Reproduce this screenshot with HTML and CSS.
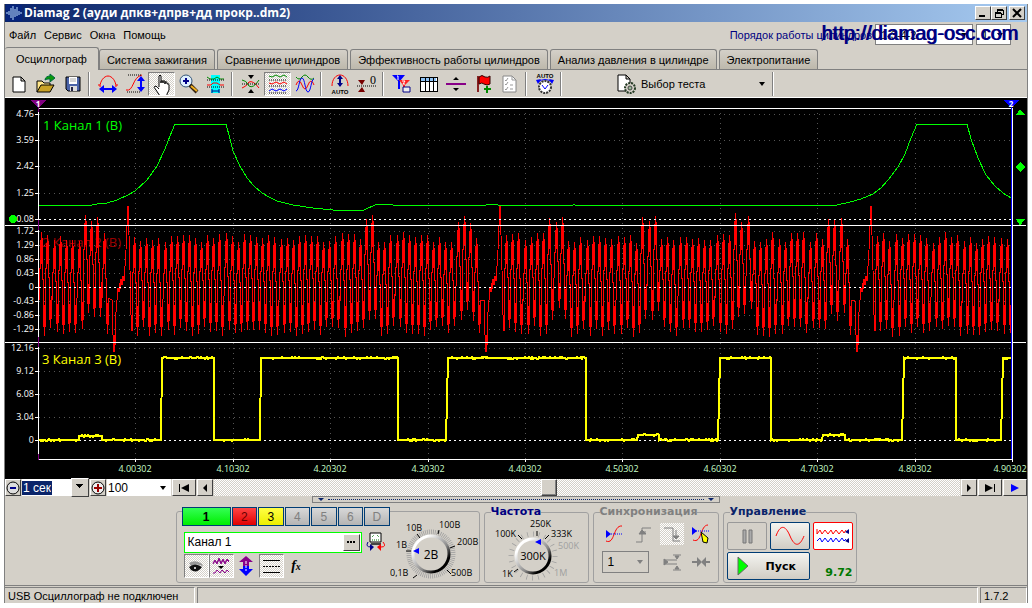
FILE: index.html
```html
<!DOCTYPE html>
<html lang="ru">
<head>
<meta charset="utf-8">
<title>Diamag 2</title>
<link rel="stylesheet" href="styles.css">
</head>
<body>
<div class="window">
  <header class="titlebar">
    <svg class="app-icon" width="16" height="16" viewBox="0 0 16 16"><rect width="16" height="16" fill="#06247c"/><path d="M0 8h2M3 6v4M5 3v10M7 1v14M9 4v8M11 2v9M13 6v4M14 8h2" stroke="#bfe0ff" stroke-width="1"/></svg>
    <h1 class="title">Diamag 2 (ауди дпкв+дпрв+дд прокр..dm2)</h1>
    <div class="window-buttons">
      <button class="caption" aria-label="Свернуть"><svg width="12" height="10"><path d="M2 8h6" stroke="#000" stroke-width="2"/></svg></button>
      <button class="caption" aria-label="Восстановить"><svg width="12" height="10" fill="none" stroke="#000" shape-rendering="crispEdges"><path d="M4 1h6M4 2h6v4h-2M4 1v3M2 4h6M2 5h6v4h-6z"/></svg></button>
      <button class="caption close" aria-label="Закрыть"><svg width="12" height="10"><path d="M2 1l8 8M10 1l-8 8" stroke="#000" stroke-width="2"/></svg></button>
    </div>
  </header>

  <div class="menubar">
    <nav class="menu"><button>Файл</button><button>Сервис</button><button>Окна</button><button>Помощь</button></nav>
    <div class="order">
      <label for="order">Порядок работы цилиндров</label>
      <span class="combo order-box"><select id="order"><option>1-3-4-2</option></select></span>
      <span class="combo spin"><select aria-label="Цилиндр"><option>1</option></select></span>
    </div>
    <a class="watermark" href="#">http://diamag-osc.com</a>
  </div>

  <div class="tabs" role="tablist">
    <button class="tab active" role="tab">Осциллограф</button>
    <button class="tab" role="tab">Система зажигания</button>
    <button class="tab" role="tab">Сравнение цилиндров</button>
    <button class="tab" role="tab">Эффективность работы цилиндров</button>
    <button class="tab" role="tab">Анализ давления в цилиндре</button>
    <button class="tab" role="tab">Электропитание</button>
  </div>

  <div class="toolbar">
    <div class="tools">
      <button class="tool" aria-label="Новый"><svg width="22" height="22" viewBox="0 0 22 22"><path d="M5 4h8l4 4v11H5zM13 4v4h4" fill="#fff" stroke="#000"/></svg></button>
      <button class="tool" aria-label="Открыть"><svg width="22" height="22" viewBox="0 0 22 22"><path d="M2 19V8h5l2 2h6v3" fill="#ffe68a" stroke="#000"/><path d="M2 19l4-7h13l-4 7z" fill="#c9a227" stroke="#000"/><path d="M10 7c0-3 3-4 5-4V1l5 4-5 4V6c-2 0-3 0-5 1z" fill="#0a9a0a" stroke="#064"/></svg></button>
      <button class="tool" aria-label="Сохранить"><svg width="22" height="22" viewBox="0 0 22 22"><path d="M4 4h14v14H6l-2-2z" fill="#4a63a8" stroke="#000"/><path d="M7 4h8v7H7z" fill="#fff"/><path d="M8 6h6M8 8h6" stroke="#aaa"/><path d="M8 13h7v5H8z" fill="#ddd"/><path d="M9 14h2v4H9z" fill="#224"/></svg></button>
    </div>
    <div class="tools">
      <button class="tool" aria-label="Растянуть по времени"><svg width="22" height="22" viewBox="0 0 22 22" fill="none"><path d="M3 14C3 8 7 3 11 3s8 5 8 11" stroke="#f00"/><path d="M5 16h12" stroke="#00f" stroke-width="2"/><path d="M2 16l5-4v8zM20 16l-5-4v8z" fill="#00f"/><path d="M2 11v2M20 11v2" stroke="#f00"/></svg></button>
      <button class="tool" aria-label="Растянуть по амплитуде"><svg width="22" height="22" viewBox="0 0 22 22" fill="none"><path d="M2 17c8 2 6-13 16-15" stroke="#f00"/><path d="M4 2h14M3 19h14" stroke="#000" stroke-dasharray="1 1"/><path d="M17 7v8" stroke="#00f" stroke-width="2"/><path d="M17 3l-4 5h8zM17 19l-4-5h8z" fill="#00f"/></svg></button>
      <button class="tool pressed" aria-label="Рука"><svg width="22" height="22" viewBox="0 0 22 22"><path d="M8 14V3q1-2 2 0v7V8q2-1 2 1v1-2q2-1 2 1v2-2q2-1 2 1v1q2-1 2 1v5l-2 4v2H9l-4-6q-3-3-1-4 2 0 4 3" fill="#fff" stroke="#000"/></svg></button>
      <button class="tool" aria-label="Масштаб"><svg width="22" height="22" viewBox="0 0 22 22"><circle cx="8" cy="8" r="6" fill="#dff0ff" stroke="#357"/><path d="M5 8h6M8 5v6" stroke="#008" stroke-width="2"/><path d="M12 12l7 7" stroke="#321" stroke-width="4"/><path d="M13 13l6 5" stroke="#f0b020" stroke-width="2"/></svg></button>
      <button class="tool" aria-label="Диапазон"><svg width="22" height="22" viewBox="0 0 22 22" fill="none"><path d="M6 2h9v18H6z" fill="#0ff"/><path d="M2 4l3 2h4l3-2 3 2h4" stroke="#080"/><path d="M2 7h18M2 14h18" stroke="#000" stroke-dasharray="1 1"/><path d="M2 12h4l2-2h4l3 2h4" stroke="#f00"/><path d="M7 18h7M7 16v4M14 16v4" stroke="#008"/></svg></button>
    </div>
    <div class="tools">
      <button class="tool" aria-label="Совместить"><svg width="22" height="22" viewBox="0 0 22 22" fill="none"><path d="M2 15q4-1 7-6 4-2 10 6" stroke="#f00"/><path d="M2 7q4 0 7 6 4 3 10-6" stroke="#080"/><path d="M2 11h18" stroke="#000" stroke-dasharray="1 1"/><path d="M8 2h6l-3 4zM8 20h6l-3-4z" fill="#000"/></svg></button>
      <button class="tool pressed" aria-label="Раздельно"><svg width="22" height="22" viewBox="0 0 22 22" fill="none"><path d="M2 3l3 1 4-2 4 2 4-2 3 2" stroke="#080"/><path d="M2 10l3 1 4-2 4 2 4-2 3 2" stroke="#f00"/><path d="M2 18l3-2 4 2 4-2 4 2 3-2" stroke="#00f"/><path d="M2 7h18M2 13h18M2 20h18" stroke="#000" stroke-dasharray="1 1"/></svg></button>
      <button class="tool" aria-label="Наложение"><svg width="22" height="22" viewBox="0 0 22 22" fill="none"><path d="M2 4q3 4 6 0t6 0 6 1" stroke="#080"/><path d="M2 12q3-8 6 0t6 0 6 0" stroke="#f00"/><path d="M2 18C5 18 5 5 8 5s3 14 6 14 3-13 6-13" stroke="#00f"/></svg></button>
    </div>
    <div class="tools">
      <button class="tool" aria-label="Автомасштаб"><svg width="22" height="22" viewBox="0 0 22 22" fill="none"><path d="M3 13C3 6 7 2 11 2s8 4 8 11" stroke="#f00"/><path d="M11 4v9" stroke="#008" stroke-width="2"/><path d="M11 2l-3 4h6zM11 14l-3-4h6z" fill="#008"/><text class="tiny" x="11" y="21" text-anchor="middle">AUTO</text></svg></button>
      <button class="tool" aria-label="Ноль"><svg width="22" height="22" viewBox="0 0 22 22"><path d="M1 13h20" stroke="#000" stroke-dasharray="1 1"/><path d="M2 7h7l-3 5zM2 19h7l-3-5z" fill="#700"/><text class="zero" x="14" y="11">0</text></svg></button>
    </div>
    <div class="tools">
      <button class="tool" aria-label="Маркеры"><svg width="22" height="22" viewBox="0 0 22 22"><path d="M1 2h13l-5 6v8H7V8z" fill="#00f"/><path d="M8 7h11l-5 5v7h-2v-7z" fill="#f22"/><path d="M6 3h1v4M11 8h3l-2 3h2" fill="none" stroke="#fff"/><path d="M12 14h7v5h-7z" fill="#eee" stroke="#008"/></svg></button>
      <button class="tool" aria-label="Таблица"><svg width="22" height="22" viewBox="0 0 22 22" shape-rendering="crispEdges"><path d="M2 4h17v14H2z" fill="#fff" stroke="#000"/><path d="M3 5h15v3H3z" fill="#8fc3f5"/><path d="M2 8h17M7 4v14M11 4v14M15 4v14" stroke="#000"/></svg></button>
      <button class="tool" aria-label="Разделить"><svg width="22" height="22" viewBox="0 0 22 22"><path d="M1 11h20" stroke="#808" stroke-width="2"/><path d="M8 7h6l-3-3zM8 15h6l-3 3z"/></svg></button>
      <button class="tool" aria-label="Метка"><svg width="22" height="22" viewBox="0 0 22 22"><path d="M6 3v16" stroke="#822" stroke-width="2"/><path d="M7 4q3-3 6 0 3 1 5-1v8q-3 2-6 0-2-2-5 0z" fill="#f00" stroke="#300"/><path d="M12 16h7M15 13v7" stroke="#080" stroke-width="2"/></svg></button>
      <button class="tool" aria-label="Отчёт"><svg width="22" height="22" viewBox="0 0 22 22" fill="none"><path d="M4 3h9l4 4v12H4z" fill="#fff" stroke="#888"/><path d="M13 3v4h4M6 7l1 1 2-3M6 11l1 1 2-3M6 16l1 1 2-3M11 12h3M11 16h3" stroke="#999"/></svg></button>
    </div>
    <div class="tools">
      <button class="tool" aria-label="Авто"><svg width="22" height="22" viewBox="0 0 22 22" fill="none"><text class="tiny" x="11" y="5" text-anchor="middle">AUTO</text><path d="M4 9q7-5 14 0" stroke="#00f"/><path d="M2 7l5-1-3 5zM20 7l-5-1 3 5z" fill="#00f"/><circle cx="11" cy="14" r="6" fill="#fff" stroke="#333" stroke-width="2" stroke-dasharray="2 1"/><path d="M8 12l3 4 3-4" stroke="#00f" stroke-width="1"/></svg></button>
    </div>
    <div class="tools test">
      <button class="test-button"><svg width="22" height="22" viewBox="0 0 22 22" fill="none"><path d="M2 2h8l4 4v12H2zM10 2v4h4" fill="#fff" stroke="#000"/><circle cx="14" cy="15" r="5" fill="#d4d0c8" stroke="#243a24" stroke-width="2" stroke-dasharray="2 1"/><circle cx="14" cy="15" r="2" fill="#9b9" stroke="#444"/></svg>Выбор теста<span class="down"></span></button>
    </div>
    <div class="tools"></div>
  </div>

  <svg class="chart" id="chart" viewBox="5 98 1022 381" role="img" aria-label="Осциллограмма">
    <g class="grid" id="grid"></g>
    <path class="trace red" id="trace2"/>
    <path class="zero-line" d="M39 219H1011M39 287H1011M39 440H1011"/>
    <path class="frame" d="M38 108H1012M5 225H1026M5 342H1026M38 459H1012M38 103V459M1012 108V459"/>
    <path class="cursor1" d="M38 103V112M38 220V230M38 337V347M38 454V460"/>
    <path class="cursor2" d="M1011 106V459"/>
    <path class="trace green" d="M39 205H92L97 204 107 203 117 200 128 195 135 191 147 180 157 166 165 149 170 136 175 124H226L230 139 233 151 240 166 247 178 254 186 262 193 269 197 277 201 293 205 313 208 333 210H364L375 205 386 204H392L393 205H486L488 204H497L498 205H573L574 204 575 205H837L850 202 861 199 873 194 881 188 888 180 898 167 905 154 911 138 917 124H935L936 125 937 124H958L959 125 960 124H967L971 139 978 158 986 175 995 186 1003 193 1011 198"/>
    <path class="trace yellow" id="trace3"/>
    <g class="axis" id="axis"></g>
    <text class="ch ch1" x="43" y="130">1 Канал 1 (В)</text>
    <text class="ch ch2" x="42" y="247">2 Канал 2 (В)</text>
    <text class="ch ch3" x="42" y="364">3 Канал 3 (В)</text>
    <path d="M31 100H46L38 108z" fill="#800080"/><text class="mark" x="38" y="107">1</text>
    <path d="M1003 100H1019L1011 108z" fill="#00f"/><text class="mark" x="1011" y="107">2</text>
    <circle cx="13" cy="219" r="4" fill="#0f0"/>
    <path d="M1016 115h9l-5-6zM1020 162l5 5-5 5-5-5zM1016 219h9l-5 7z" fill="#0f0"/>
  </svg>

  <div class="scroll-row">
    <button class="flat" aria-label="Сжать"><svg width="14" height="14"><circle cx="7" cy="7" r="6" fill="#ddd" stroke="#000"/><path d="M4 7h6" stroke="#008" stroke-width="2"/></svg></button>
    <span class="combo scale"><select class="picked" aria-label="Развёртка"><option>1 сек</option></select></span>
    <button class="flat" aria-label="Растянуть"><svg width="14" height="14"><circle cx="7" cy="7" r="6" fill="#eee" stroke="#000"/><path d="M3 7h8M7 3v8" stroke="#900" stroke-width="2"/></svg></button>
    <span class="combo percent"><select aria-label="Масштаб"><option>100</option></select></span>
    <button class="flat wide" aria-label="В начало"><svg width="12" height="8"><path d="M1 0h1v8H1zM11 0v8L3 4z"/></svg></button>
    <button class="flat" aria-label="Назад"><svg width="6" height="8"><path d="M5 0v8L1 4z"/></svg></button>
    <input class="track" type="range" min="0" max="1000" value="448" aria-label="Прокрутка">
    <button class="flat" aria-label="Вперёд"><svg width="6" height="8"><path d="M1 0v8l4-4z"/></svg></button>
    <button class="flat wide" aria-label="В конец"><svg width="12" height="8"><path d="M1 0v8l8-4zM10 0h1v8h-1z"/></svg></button>
    <button class="flat wide" aria-label="Пуск просмотра"><svg width="10" height="8"><path d="M1 0v8l8-4z" fill="#00f"/></svg></button>
  </div>

  <button class="splitter" aria-label="Свернуть панель"><i></i><b></b><i></i></button>

  <main class="panels">
    <section class="group channel">
      <div class="channel-controls">
        <div class="channels">
          <button class="chan c1">1</button><button class="chan c2">2</button><button class="chan c3">3</button><button class="chan">4</button><button class="chan">5</button><button class="chan">6</button><button class="chan">D</button>
        </div>
        <div class="name-row">
          <div class="name-box"><input value="Канал 1" aria-label="Имя канала"><button aria-label="Выбрать"><svg width="9" height="2"><path d="M0 0h2v2H0zM3 0h2v2H3zM6 0h2v2H6z"/></svg></button></div>
          <button class="plain" aria-label="Инвертировать"><svg width="20" height="20" viewBox="0 0 20 20" fill="none"><path d="M4 1h11v9H4z" fill="#fff" stroke="#000"/><path d="M5 11h10v2H5z" fill="#444"/><path d="M6 5l2-2M11 3l2 2M6 8h8" stroke="#070" stroke-dasharray="1 1"/><path d="M2 10q-3 5 3 5" stroke="#008"/><path d="M4 12l4 3-4 4z" fill="#008"/><path d="M17 10q4 5-2 5" stroke="#f00"/><path d="M15 12l-4 3 4 4z" fill="#f00"/></svg></button>
        </div>
        <div class="toggles">
          <button class="toggle pressed" aria-label="Видимость"><svg width="22" height="20" viewBox="0 0 22 20"><path d="M4 7q7-4 13 1l1 2q-7-3-12 0z" fill="#999"/><path d="M4 11q6-5 13 0-5 7-11 3z" fill="#111"/><circle cx="10" cy="12" r="1" fill="#fff"/></svg></button>
          <button class="toggle pressed" aria-label="Фильтр"><svg width="22" height="20" viewBox="0 0 22 20" fill="none" stroke="#808"><path d="M3 7l2-3 2 3 2-5 2 5 2-4 2 4 2-4 2 2"/><path d="M3 8l2-3 2 3 2-5 2 5 2-4 2 4 2-4 2 2"/><path d="M3 17l2 0 2-3 3 3 2-3 3 3 2-3 2 2"/><path d="M8 10h6l-3 3z" fill="#000" stroke="none"/></svg></button>
          <button class="toggle" aria-label="Сдвиг"><svg width="22" height="20" viewBox="0 0 22 20"><path d="M11 0l7 6h-4v4H8V6H4z" fill="#808"/><path d="M11 20l7-7h-4v-3H8v3H4z" fill="#00f"/><path d="M11 5v10" stroke="#fff" stroke-dasharray="3 1"/></svg></button>
          <button class="toggle pressed" aria-label="Линии"><svg width="22" height="20" viewBox="0 0 22 20" stroke="#000" shape-rendering="crispEdges"><path d="M3 4h17M3 16h17"/><path d="M3 10h17" stroke-dasharray="2 1"/></svg></button>
          <button class="toggle fx" aria-label="Функция">f<small>x</small></button>
        </div>
      </div>
      <svg class="knob" width="89" height="68" viewBox="388 514 89 68">
        <defs><linearGradient id="rim" x1="0" y1="0" x2="1" y2="1"><stop offset="0.2" stop-color="#fff"/><stop offset="0.6" stop-color="#888"/><stop offset="0.8" stop-color="#000"/></linearGradient></defs>
        <circle class="ticks fine" cx="429" cy="556" r="22" pathLength="360" transform="rotate(135 429 556)"/>
        <path class="dark-ticks" d="M415 577l-4 3M409 553h-5M418 540l-3-4M436 536l1-4M448 550l5-2M445 572l4 4"/>
        <circle cx="429" cy="556" r="18" fill="#d4d0c8" stroke="url(#rim)" stroke-width="3"/>
        <path d="M411 553l6-3v6z" fill="#00f"/>
        <text class="value" x="429" y="561">2В</text>
        <text x="388" y="578">0,1В</text><text x="394" y="550">1В</text><text x="404" y="533">10В</text><text x="437" y="530">100В</text><text x="455" y="547">200В</text><text x="449" y="578">500В</text>
      </svg>
    </section>

    <fieldset class="group frequency">
      <legend>Частота</legend>
      <svg class="knob" width="92" height="64" viewBox="492 518 92 64">
        <circle class="ticks" cx="533" cy="557" r="22" pathLength="360" transform="rotate(135 533 557)"/>
        <path class="dark-ticks" d="M518 570l-4 3M522 540l-4-4M537 537v-5M545 540l4-4"/>
        <circle cx="533" cy="557" r="17" fill="#d4d0c8" stroke="url(#rim)" stroke-width="3"/>
        <path d="M535 543l6-3v6z" fill="#00f"/>
        <text class="value mid" x="533" y="561">300K</text>
        <text x="502" y="578">1K</text><text x="495" y="538">100K</text><text x="530" y="528">250K</text><text x="551" y="538">333K</text><text class="dim" x="558" y="550">500K</text><text class="dim" x="554" y="577">1M</text>
      </svg>
    </fieldset>

    <fieldset class="group sync">
      <legend>Синхронизация</legend>
      <div class="sync-grid">
        <button class="plain" aria-label="Уровень"><svg width="22" height="20" viewBox="0 0 22 20" fill="none"><path d="M3 17c9 4 7-16 16-15" stroke="#f00"/><path d="M8 10h12" stroke="#00f" stroke-dasharray="1 1"/><path d="M3 6l5 4-5 4z" fill="#00f"/></svg></button>
        <button class="plain" aria-label="Фронт"><svg width="22" height="20" viewBox="0 0 22 20" fill="none" stroke="#808080"><path d="M4 18h6V4h9"/><path d="M8 8h6M7 10l3-4 4 4z" fill="#808080"/></svg></button>
        <button class="plain lit" aria-label="Спад"><svg width="22" height="20" viewBox="0 0 22 20" fill="none" stroke="#808080"><path d="M3 4h9v13h7M15 6v8"/><path d="M12 12h6l-3 3z" fill="#808080"/></svg></button>
        <button class="plain" aria-label="Выбор уровня"><svg width="22" height="20" viewBox="0 0 22 20" fill="none"><path d="M3 16c9 4 7-15 15-15" stroke="#f00"/><path d="M6 7h13" stroke="#00f" stroke-dasharray="1 1"/><path d="M2 3l5 4-5 4z" fill="#00f"/><path d="M11 8l7 6-1 5-4-1z" fill="#ff0" stroke="#000"/></svg></button>
        <span class="combo sync-select"><select aria-label="Канал синхронизации"><option>1</option></select></span>
        <button class="plain" aria-label="Гистерезис"><svg width="22" height="20" viewBox="0 0 22 20" fill="#808080" stroke="#808080"><path d="M12 3h8M12 18h8M4 8h12M4 12h12"/><path d="M14 4h4l-2 3zM14 17h4l-2-3zM3 7l4 3-4 3z"/></svg></button>
        <button class="plain" aria-label="Центр"><svg width="22" height="20" viewBox="0 0 22 20" fill="#808080"><path d="M2 9h5V5l5 5-5 5v-4H2zM20 9h-4V5l-5 5 5 5v-4h4z"/></svg></button>
      </div>
    </fieldset>

    <fieldset class="group control">
      <legend>Управление</legend>
      <div class="control-grid">
        <button class="push off" aria-label="Пауза"><svg width="14" height="18" viewBox="0 0 14 18"><path d="M3 3h3v13H3zM9 3h3v13H9z" fill="#aaa" stroke="#777"/></svg></button>
        <button class="push" aria-label="Однократно"><svg width="30" height="20" viewBox="0 0 30 20" fill="none"><path d="M1 10C5-1 10-2 15 10s10 10 14 0" stroke="#f00"/></svg></button>
        <button class="push on" aria-label="Непрерывно"><svg width="34" height="20" viewBox="0 0 34 20" fill="none"><path d="M1 3v5l3-4 2 4 3-4 3 4 3-4 2 4 3-4 3 4 3-4 2 3 2-3" stroke="#f00"/><path d="M1 15l3-3 2 4 3-4 3 4 3-4 2 4 3-4 3 4 3-4 2 3 2-2" stroke="#00f"/><path d="M33 3v5l-4-2zM33 12v5l-4-2z" fill="#008"/></svg></button>
        <button class="push start"><svg width="12" height="20" viewBox="0 0 12 20"><path d="M1 1l10 9L1 19z" fill="#0f0" stroke="#666"/></svg>Пуск</button>
        <output class="voltage">9.72</output>
      </div>
    </fieldset>
  </main>

  <footer class="status">
    <div class="cell first">USB Осциллограф не подключен</div>
    <div class="cell grow"></div>
    <div class="cell version">1.7.2</div>
  </footer>
</div>
<script src="chart.js"></script>
</body>
</html>
```
FILE: styles.css
```css
* { box-sizing: border-box; }
body { margin: 0; background: #fff; color: #000; font: 11px/14px "Liberation Sans", Arial, sans-serif; }
button, select, input { font: inherit; color: inherit; margin: 0; padding: 0; border: 0; border-radius: 0; background: none; }
svg { display: block; flex: none; }
.window { margin: 4px 4px 5px; border: 1px solid #808080; border-width: 0 1px; background: #d4d0c8; }

.titlebar { display: flex; align-items: center; height: 18px; padding: 0 2px 0 1px; gap: 2px; background: linear-gradient(90deg, #0a246a, #a6caf0); }
.title { flex: 1; margin: 0; color: #fff; font: bold 12px/16px "Open Sans", sans-serif; white-space: nowrap; }
.window-buttons { display: flex; }
.caption { width: 16px; height: 14px; display: flex; align-items: center; justify-content: center; background: #d4d0c8; border: 1px solid; border-color: #fff #404040 #404040 #fff; }
.close { margin-left: 2px; }

.menubar { position: relative; display: flex; justify-content: space-between; align-items: center; height: 25px; padding: 0 16px 0 4px; }
.menu { display: flex; gap: 8px; }
.order { display: flex; align-items: center; gap: 3px; color: navy; }
.order .combo { height: 21px; border: 1px solid #808080; color: #000; }
.order-box { width: 98px; }
.spin { width: 35px; }
.watermark { position: absolute; right: 9px; top: 0; color: #000080; font: 20px/22px "Liberation Sans", Arial, sans-serif; text-decoration: none; text-shadow: 1px 0 #000080; }

.combo { display: flex; align-items: center; position: relative; background: #fff; }
.combo select { appearance: none; flex: 1; padding: 0 5px; line-height: 14px; }
.combo::after, .down { content: ""; border: 3px solid transparent; border-top: 4px solid #000; border-bottom: 0; margin: 0 5px; }
.spin::after { margin: 0 7px 0 0; }

.tabs { display: flex; align-items: flex-end; gap: 2px; height: 23px; border-bottom: 1px solid #808080; }
.tab { height: 20px; padding: 0 7px; white-space: nowrap; background: linear-gradient(#d4d0c8, #bdb8ac); border: 1px solid #808080; border-bottom: 0; border-radius: 3px 3px 0 0; }
.tab.active { height: 23px; margin: 0 -2px -1px 0; padding: 0 11px; background: #d4d0c8; border-left: 0; }

.toolbar { display: flex; align-items: center; height: 28px; border-bottom: 1px solid #fff; }
.tools { display: flex; padding-right: 3px; margin-right: 4px; height: 24px; border-right: 1px solid #fff; box-shadow: inset -1px 0 #808080; }
.tools:last-child { border: 0; box-shadow: none; }
.tool, .toggle { width: 27px; height: 24px; display: flex; align-items: center; justify-content: center; }
.pressed, .lit { background: repeating-conic-gradient(#fff 0 25%, #d4d0c8 0 50%) 0 0 / 2px 2px; }
.pressed { border: 1px solid; border-color: #808080 #fff #fff #808080; }
.tiny { font: bold 6px "Liberation Sans", sans-serif; fill: #000; }
.zero { font: 12px "Liberation Serif", serif; }
.test { width: 208px; padding: 0 4px 0 50px; }
.test-button { flex: 1; display: flex; align-items: center; gap: 3px; }
.down { margin-left: auto; margin-right: 4px; }

.chart { width: 100%; background: #000; shape-rendering: crispEdges; font: 9px "Open Sans", sans-serif; }
.grid-line, .frame, .zero-line, .cursor1, .cursor2, .trace { fill: none; stroke-width: 1; }
.grid-line { stroke: #555; stroke-dasharray: 1 4; }
.zero-line { stroke: #fff; stroke-dasharray: 2 3; }
.frame { stroke: #fff; }
.cursor1 { stroke: #800080; }
.cursor2 { stroke: #0000ff; }
.red { stroke: #f00; }
.green { stroke: #0f0; }
.yellow { stroke: #ff0; stroke-width: 2; }
.axis text { fill: #fff; }
.axis .time { fill: #c8ffc8; text-anchor: middle; }
.axis .level { text-anchor: end; }
.ch { font-size: 13px; }
.ch1 { fill: #0f0; }
.ch2 { fill: #f00; opacity: 0.6; }
.ch3 { fill: #ff0; }
.mark { font-size: 8px; font-weight: bold; fill: #fff; text-anchor: middle; }

.scroll-row { display: flex; gap: 1px; height: 17px; }
.flat { width: 16px; display: flex; align-items: center; justify-content: center; border: 1px solid; border-color: #fff #404040 #404040 #fff; background: #d4d0c8; flex: none; }
.wide { width: 24px; }
.scale { width: 67px; }
.scale .picked { flex: 0 1 29px; margin-right: auto; padding: 0 1px; background: #0a246a; color: #fff; }
.scale::after { margin: 0; border: 0; width: 16px; height: 17px; border: 1px solid; border-color: #fff #404040 #404040 #fff; background: conic-gradient(from 315deg at 50% 65%, #000 0 90deg, #d4d0c8 0) 4px 6px / 7px 4px no-repeat, #d4d0c8; background: linear-gradient(#000, #000) 4px 5px / 7px 1px no-repeat, linear-gradient(#000, #000) 5px 6px / 5px 1px no-repeat, linear-gradient(#000, #000) 6px 7px / 3px 1px no-repeat, linear-gradient(#000, #000) 7px 8px / 1px 1px no-repeat, #d4d0c8; }
.percent { width: 64px; }
.percent select { padding: 0 1px; }
.scroll-row .combo { font-size: 12px; }
.track { appearance: none; flex: 1; height: 17px; background: repeating-conic-gradient(#fff 0 25%, #d4d0c8 0 50%) 0 0 / 2px 2px; }
.track::-webkit-slider-thumb { appearance: none; width: 16px; height: 17px; background: #d4d0c8; border: 1px solid; border-color: #fff #404040 #404040 #fff; box-shadow: inset -1px -1px #808080; }

.splitter { display: flex; align-items: center; gap: 4px; width: 408px; height: 7px; margin: 0 auto; padding: 0 5px; border: 1px solid #808080; }
.splitter i { border: 3px solid transparent; border-top: 3px solid #0a246a; border-bottom: 0; }
.splitter b { flex: 1; border-top: 1px dotted #0a246a; }

.panels { display: flex; justify-content: center; align-items: flex-end; gap: 4px; padding: 3px 0 2px; }
.group { margin: 0; padding: 0; min-width: 0; height: 77px; border: 1px solid #a0a0a0; border-radius: 3px; }
.group legend { margin-left: 6px; padding: 0; color: #000080; font: bold 11px/12px "DejaVu Sans", sans-serif; }
.channel { display: flex; width: 304px; height: 72px; justify-content: space-between; }
.channel-controls { display: flex; flex: none; flex-direction: column; width: 208px; margin-left: 5px; }
.channels { display: flex; gap: 1px; height: 19px; margin-top: -5px; background: #d4d0c8; }
.chan { flex: 1; border: 1px solid #003c74; background: linear-gradient(#d8d8d8, #b4b4b4); color: #808080; font-size: 12px; line-height: 16px; }
.c1 { flex: 2; background: linear-gradient(#3f5, #0e0); color: #000; font-weight: bold; }
.c2 { background: linear-gradient(#f44, #e00000); color: #600; }
.c3 { background: linear-gradient(#ff4, #eded00); color: #000; }
.name-row { display: flex; align-items: center; gap: 4px; margin: 5px 0 1px 2px; }
.name-box { display: flex; width: 178px; height: 21px; padding: 1px; border: 1px solid #0f0; background: #fff; }
.name-box input { flex: 1; min-width: 0; padding-left: 2px; font-size: 12px; }
.name-box button { display: flex; align-items: center; justify-content: center; width: 17px; border: 1px solid; border-color: #fff #404040 #404040 #fff; background: #d4d0c8; }
.toggles { display: flex; margin-left: 2px; }
.toggle { width: 25px; }
.fx { font: italic bold 14px "Liberation Serif", serif; }
.fx small { font-size: 10px; }
.knob { font: 9px "Open Sans", sans-serif; }
.ticks { fill: none; stroke: #a0a0a0; stroke-width: 5; stroke-dasharray: 2 13; }
.fine { stroke-dasharray: 2 3; }
.dark-ticks { fill: none; stroke: #000; }
.value { font-size: 12px; text-anchor: middle; }
.mid { font-size: 11px; }
.dim { fill: #a0a0a0; }

.frequency { width: 105px; }
.frequency .knob { margin: -1px 0 0 7px; }
.sync { width: 126px; }
.sync legend { color: #808080; }
.sync-grid { display: grid; grid-template-columns: repeat(4, 24px); gap: 6px 5px; padding: 5px 0 0 8px; align-items: center; }
.plain { display: flex; align-items: center; justify-content: center; min-height: 22px; }
.sync-select { grid-column: span 2; width: 47px; height: 22px; border: 1px solid #808080; background: #d4d0c8; font-size: 12px; }
.sync-select::after { border-top-color: #808080; }
.control { width: 134px; }
.control legend { color: #0a246a; }
.control-grid { display: grid; grid-template-columns: repeat(3, 40px); gap: 2px 3px; padding: 4px 0 0 3px; }
.push { display: flex; align-items: center; justify-content: center; height: 28px; border: 1px solid #003c74; border-radius: 2px; background: linear-gradient(#f4f4f0, #d0ccc4); }
.off { border-color: #999; background: #d4d0c8; }
.on { border-color: #f00; background: #fff; }
.start { grid-column: span 2; justify-content: flex-start; gap: 17px; padding-left: 9px; font: bold 11px "DejaVu Sans", sans-serif; }
.voltage { align-self: end; color: #007800; font: bold 11px/14px "DejaVu Sans", sans-serif; text-align: right; }

.status { display: flex; gap: 2px; height: 18px; border-top: 1px solid #808080; padding-top: 1px; }
.cell { padding: 0 3px; line-height: 16px; border: 1px solid; border-color: #808080 #fff #fff #808080; border-bottom: 0; }
.first { width: 190px; border-left: 0; }
.grow { flex: 1; }
.version { width: 47px; }
```
FILE: chart.js
```js
const NS = 'http://www.w3.org/2000/svg';
const axis = document.getElementById('axis');
const grid = document.getElementById('grid');

function label(cls, x, y, text) {
  const t = document.createElementNS(NS, 'text');
  t.setAttribute('class', cls);
  t.setAttribute('x', x);
  t.setAttribute('y', y);
  t.textContent = text;
  axis.append(t);
}

function line(parent, cls, d) {
  const p = document.createElementNS(NS, 'path');
  p.setAttribute('class', cls);
  p.setAttribute('d', d);
  parent.append(p);
}

// Voltage levels of the three channels
const levels = [
  [114, '4.76'], [140, '3.59'], [166, '2.42'], [193, '1.25'], [219, '0.08'],
  [231, '1.72'], [245, '1.29'], [259, '0.86'], [273, '0.43'], [287, '0'],
  [301, '-0.43'], [315, '-0.86'], [329, '-1.29'],
  [348, '12.16'], [371, '9.12'], [394, '6.08'], [417, '3.04'], [440, '0']
];
for (const [y, text] of levels) {
  label('level', 34, y + 3, text);
  line(grid, 'grid-line', `M39 ${y}H1011`);
  line(axis, 'frame', `M35 ${y}H38`);
}

// Time marks
[135, 233, 330, 428, 525, 622, 720, 817, 915, 1012].forEach((x, i) => {
  label('time', Math.min(x, 1010), 472, (4.00302 + i / 10).toFixed(5));
  if (x < 1011) line(grid, 'grid-line', `M${x} 108V459`);
  line(axis, 'frame', `M${x} 459V462`);
});

// Repeatable noise
let seed = 7;
function noise() {
  seed = (seed * 16807) % 2147483647;
  return seed / 2147483647;
}

// Crankshaft sensor: 60-2 toothed wheel
const gaps = [114, 486, 857];
const bumps = [[83, 215], [90, 221], [96, 217], [367, 219], [373, 215], [455, 222], [462, 216], [468, 223],
  [548, 218], [555, 222], [561, 217], [641, 217], [648, 221], [654, 216], [734, 213], [740, 222], [746, 216],
  [826, 219], [833, 220], [839, 218]];
const pts = [];
function tooth(x, top, bottom) {
  const mid = (top + bottom) / 2;
  const up = mid - top;
  const low = bottom - mid;
  pts.push([x - 2, mid + low * 0.3], [x - 2, mid - up * 0.3], [x - 1, mid - up * 0.3], [x - 1, top + 8],
    [x, top + 8], [x, top], [x, top + up * 0.6], [x + 1, top + up * 0.6], [x + 1, top + 6], [x + 1, mid - up * 0.1],
    [x + 2, mid - up * 0.1], [x + 2, bottom - low * 0.2], [x + 3, bottom - low * 0.2], [x + 3, bottom],
    [x + 3, mid + low * 0.4], [x + 4, mid + low * 0.4], [x + 4, bottom - 9], [x + 4, mid + low * 0.3]);
}
function run(from, to) {
  const n = Math.round((to - from) / 6.15);
  const step = (to - from) / n;
  for (let i = 0; i < n; i++) {
    const x = Math.round(from + i * step);
    const bump = bumps.find(b => Math.abs(b[0] - x) <= 3);
    if (bump) tooth(x, bump[1], 308 + noise() * 13);
    else tooth(x, 232 + noise() * 11, 326 + noise() * 11);
  }
}
run(41, 110);
for (let g = 0; g < gaps.length; g++) {
  const x = gaps[g];
  pts.push([x - 2, 300], [x - 1, 335], [x, 352], [x, 335], [x + 1, 345], [x + 1, 320], [x + 2, 312], [x + 3, 300], [x + 4, 288],
    [x + 5, 292], [x + 5, 283], [x + 6, 289], [x + 7, 279], [x + 8, 285], [x + 9, 276], [x + 10, 281],
    [x + 11, 266], [x + 12, 250], [x + 13, 226], [x + 14, 206], [x + 14, 218], [x + 15, 235], [x + 16, 270], [x + 17, 315], [x + 18, 331]);
  run(x + 20, g < 2 ? gaps[g + 1] - 4 : 1013);
}
document.getElementById('trace2').setAttribute('d', 'M' + pts.filter(p => p[0] < 1012).map(p => p[0] + ' ' + Math.round(p[1])).join('L'));

// Camshaft sensor: square pulses and small bumps, [start, end, level]
const parts = [
  [39, 79, 440], [79, 102, 436], [102, 161, 440], [162, 214, 358], [214, 260, 440], [261, 398, 358],
  [398, 446, 440], [448, 586, 358], [586, 637, 440], [638, 659, 435], [659, 718, 440], [720, 771, 358],
  [771, 822, 440], [823, 845, 435], [845, 902, 440], [904, 956, 358], [956, 1001, 440], [1003, 1011, 358]
];
const cam = [];
for (const [from, to, level] of parts) {
  cam.push([from, level]);
  for (let x = from + 1; x < to; x++) {
    const r = noise();
    cam.push([x, level + (r < 0.12 ? -1 : r > 0.88 ? 1 : 0)]);
  }
  cam.push([to, level]);
}
document.getElementById('trace3').setAttribute('d', 'M' + cam.map(p => p.join(' ')).join('L'));
```
